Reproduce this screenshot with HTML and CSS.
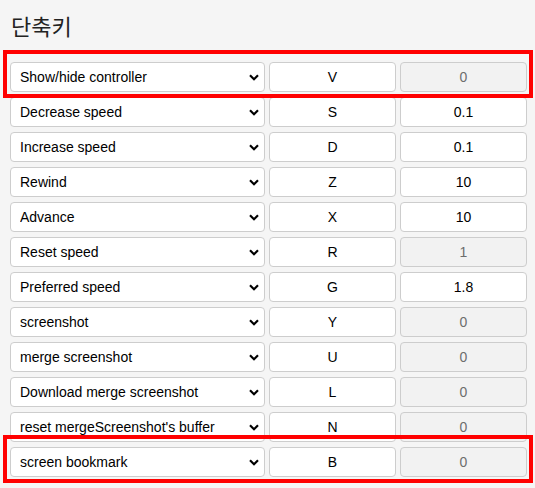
FILE: index.html
```html
<!DOCTYPE html>
<html lang="ko">
<head>
  <meta charset="UTF-8">
  <title>단축키</title>
  <link rel="stylesheet" href="styles.css">
</head>
<body>

  <h1 class="title">단축키</h1>

  <div class="shortcuts" id="shortcuts"></div>

  <script>
    const shortcuts = [
      { action: "Show/hide controller", key: "V", value: "0", disabled: true, marked: true },
      { action: "Decrease speed", key: "S", value: "0.1" },
      { action: "Increase speed", key: "D", value: "0.1" },
      { action: "Rewind", key: "Z", value: "10" },
      { action: "Advance", key: "X", value: "10" },
      { action: "Reset speed", key: "R", value: "1", disabled: true },
      { action: "Preferred speed", key: "G", value: "1.8" },
      { action: "screenshot", key: "Y", value: "0", disabled: true },
      { action: "merge screenshot", key: "U", value: "0", disabled: true },
      { action: "Download merge screenshot", key: "L", value: "0", disabled: true },
      { action: "reset mergeScreenshot's buffer", key: "N", value: "0", disabled: true },
      { action: "screen bookmark", key: "B", value: "0", disabled: true, marked: true }
    ];

    const list = document.getElementById("shortcuts");
    const chevron = '<svg class="chevron" width="10" height="7" viewBox="0 0 10 7"><path d="M1 1.2 L5 5.2 L9 1.2" fill="none" stroke="#000" stroke-width="2.2"/></svg>';

    shortcuts.forEach(s => {
      const row = document.createElement("div");
      row.className = "row" + (s.marked ? " marked" : "");
      row.innerHTML = `
        <div class="select-wrap">
          <select class="action"><option>${s.action}</option></select>
          ${chevron}
        </div>
        <input class="key" type="text" value="${s.key}">
        <input class="value" type="text" value="${s.value}" ${s.disabled ? "disabled" : ""}>
      `;
      list.appendChild(row);
    });
  </script>

</body>
</html>
```

FILE: styles.css
```css
body {
  font-family: 'Liberation Sans', Arial, sans-serif;
  background: #f5f5f5;
  margin: 0;
  padding: 0 8px 11px 10px;
}
.title {
  font-family: 'Noto Sans CJK KR', sans-serif;
  font-weight: normal;
  font-size: 22px;
  color: #222;
  margin: 0;
  padding: 10px 0 0 1px;
  height: 62px;
  box-sizing: border-box;
  line-height: 30px;
}
.shortcuts {
  display: flex;
  flex-direction: column;
  gap: 5px;
}
.row {
  display: grid;
  grid-template-columns: 255px 127px 127px;
  column-gap: 4px;
  width: 517px;
  height: 30px;
  position: relative;
}
.row.marked::after {
  content: "";
  position: absolute;
  top: -12px;
  bottom: -6px;
  left: -7px;
  right: -6px;
  border: 4px solid #ff0000;
  z-index: 2;
  pointer-events: none;
}
.select-wrap {
  position: relative;
}
.action,
.key,
.value {
  box-sizing: border-box;
  width: 100%;
  height: 30px;
  margin: 0;
  border: 1px solid #cdcdcd;
  border-radius: 4px;
  background: #fff;
  color: #000;
  font-family: 'Liberation Sans', Arial, sans-serif;
  font-size: 14px;
}
.action {
  appearance: none;
  -webkit-appearance: none;
  padding: 0 9px;
}
.chevron {
  position: absolute;
  right: 6px;
  top: 12px;
  pointer-events: none;
}
.key,
.value {
  text-align: center;
  padding: 0;
}
.value:disabled {
  background: #f2f2f2;
  color: #6d6d6d;
}
```
